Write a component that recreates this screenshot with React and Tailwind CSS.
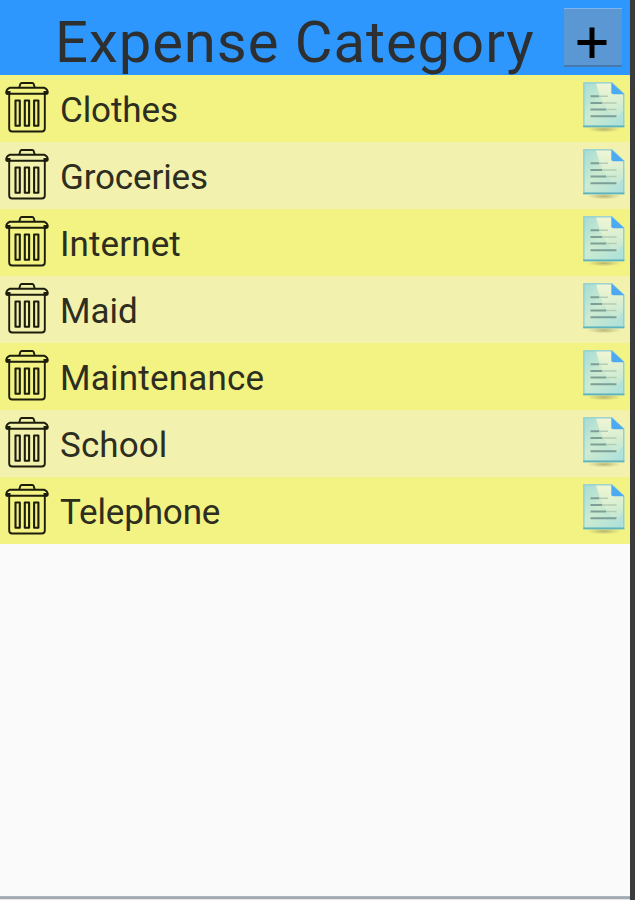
const categories = [
  { name: "Clothes", tracking: "tracking-[-0.1px]" },
  { name: "Groceries", tracking: "tracking-[-0.15px]" },
  { name: "Internet", tracking: "tracking-[0.1px]" },
  { name: "Maid", tracking: "tracking-[0px]" },
  { name: "Maintenance", tracking: "tracking-[0.2px]" },
  { name: "School", tracking: "tracking-[0.1px]" },
  { name: "Telephone", tracking: "tracking-[-0.15px]" },
];

const TrashIcon = () => (
  <svg
    width="44"
    height="53"
    viewBox="0 0 44 53"
    fill="none"
    stroke="#1d1d0c"
    strokeWidth="1.9"
    strokeLinejoin="round"
  >
    <path d="M14.3 6.5 L15.3 3 Q15.6 2 16.8 2 H27.2 Q28.4 2 28.7 3 L29.7 6.5" />
    <path d="M4.5 6.8 H39.5 Q42.8 8.3 42.8 11.5 Q42.8 12.8 41.5 12.8 H2.5 Q1.2 12.8 1.2 11.5 Q1.2 8.3 4.5 6.8 Z" />
    <path d="M1.8 11.8 H5.5 M38.5 11.8 H42.2" strokeWidth="3.4" />
    <path d="M4.2 13 V47.5 Q4.2 50.5 7.2 50.5 H36.8 Q39.8 50.5 39.8 47.5 V13" />
    <path
      d="M10.5 19.5 H14.8 V44.8 H10.5 Z M19.8 19.5 H24.1 V44.8 H19.8 Z M29.1 19.5 H33.4 V44.8 H29.1 Z"
      strokeWidth="2.1"
    />
  </svg>
);

const NoteIcon = () => (
  <svg width="44" height="52" viewBox="0 0 44 52">
    <defs>
      <linearGradient id="paper" x1="0" y1="0" x2="1" y2="1">
        <stop offset="0" stopColor="#a4dbd5" />
        <stop offset="0.45" stopColor="#cdebd0" />
        <stop offset="1" stopColor="#a9dfdc" />
      </linearGradient>
      <linearGradient id="shine" x1="0" y1="0" x2="0" y2="1">
        <stop offset="0" stopColor="#f1f6d5" />
        <stop offset="1" stopColor="#e2f2cc" stopOpacity="0.2" />
      </linearGradient>
      <radialGradient id="shadow">
        <stop offset="0" stopColor="#a9a66c" stopOpacity="0.8" />
        <stop offset="1" stopColor="#a9a66c" stopOpacity="0" />
      </radialGradient>
    </defs>
    <ellipse cx="22" cy="48.3" rx="17" ry="3" fill="url(#shadow)" />
    <path d="M1.3 1.3 H30 L42.3 12.8 V45.5 H1.3 Z" fill="url(#paper)" />
    <path d="M14 2 H30 V13 H41 V30 L34 38 Q20 26 14 2 Z" fill="url(#shine)" />
    <path
      d="M1.9 1.9 H30 L41.7 13 V45.5 H1.9 Z"
      fill="none"
      stroke="#8fd0d2"
      strokeWidth="1.3"
    />
    <path d="M1.3 45.3 H42.3" stroke="#5fb3bd" strokeWidth="1.7" />
    <path d="M29.3 1.5 L42.3 13.3 H31.3 Q29.3 13.3 29.3 11.5 Z" fill="#4daaf0" />
    <path
      d="M8.5 15.3 H17 M8.5 22 H20 M8.5 28.5 H24 M8.5 35.3 H34.5"
      stroke="#7d9f96"
      strokeWidth="2"
    />
    <path
      d="M17 15.3 H26 M20 22 H34.5 M24 28.5 H34.5"
      stroke="#b3cdb5"
      strokeWidth="1.6"
    />
  </svg>
);

const CategoryRow = ({ name, tracking }) => (
  <li className="flex h-[67px] items-start bg-[#f2f382] pl-1 pr-1 pt-[6px] even:bg-[#f2f2ae]">
    <button className="shrink-0 pl-px" aria-label={`Delete ${name}`}>
      <TrashIcon />
    </button>
    <span
      className={`ml-[11px] grow text-[35px] leading-[60px] text-[#2d2d20] ${tracking}`}
    >
      {name}
    </span>
    <button className="shrink-0" aria-label={`Edit ${name}`}>
      <NoteIcon />
    </button>
  </li>
);

const App = () => {
  return (
    <div className="flex h-[900px] w-[635px] bg-[#3b3b3b] font-['Roboto',sans-serif]">
      <div className="flex w-[630px] flex-col bg-[#fafafa]">
        <header className="flex h-[75px] shrink-0 justify-between bg-[#2e97fd] pl-[55px] pr-2">
          <h1 className="whitespace-nowrap text-[58px] leading-[84px] tracking-[0.95px] text-[#2d2f30]">
            Expense Category
          </h1>
          <button
            className="mt-2 flex h-[59px] w-[58px] shrink-0 items-center justify-center border-b-2 border-t border-b-[#4779ad] border-t-[#7fb5ec] bg-[#5b98d3] pr-[2px] pt-[12px]"
            aria-label="Add category"
          >
            <svg width="30" height="32" viewBox="0 0 30 32">
              <path d="M0.5 15.5 H29.5 M15 0.5 V31" stroke="#000" strokeWidth="5" />
            </svg>
          </button>
        </header>

        {/* Category list */}
        <ul className="grow">
          {categories.map((category) => (
            <CategoryRow key={category.name} {...category} />
          ))}
        </ul>

        <div className="h-1 border-b border-t border-b-[#e4e6e8] border-t-[#a9b3c1] bg-[#a5a9ac]" />
      </div>
    </div>
  );
};

export default App;
